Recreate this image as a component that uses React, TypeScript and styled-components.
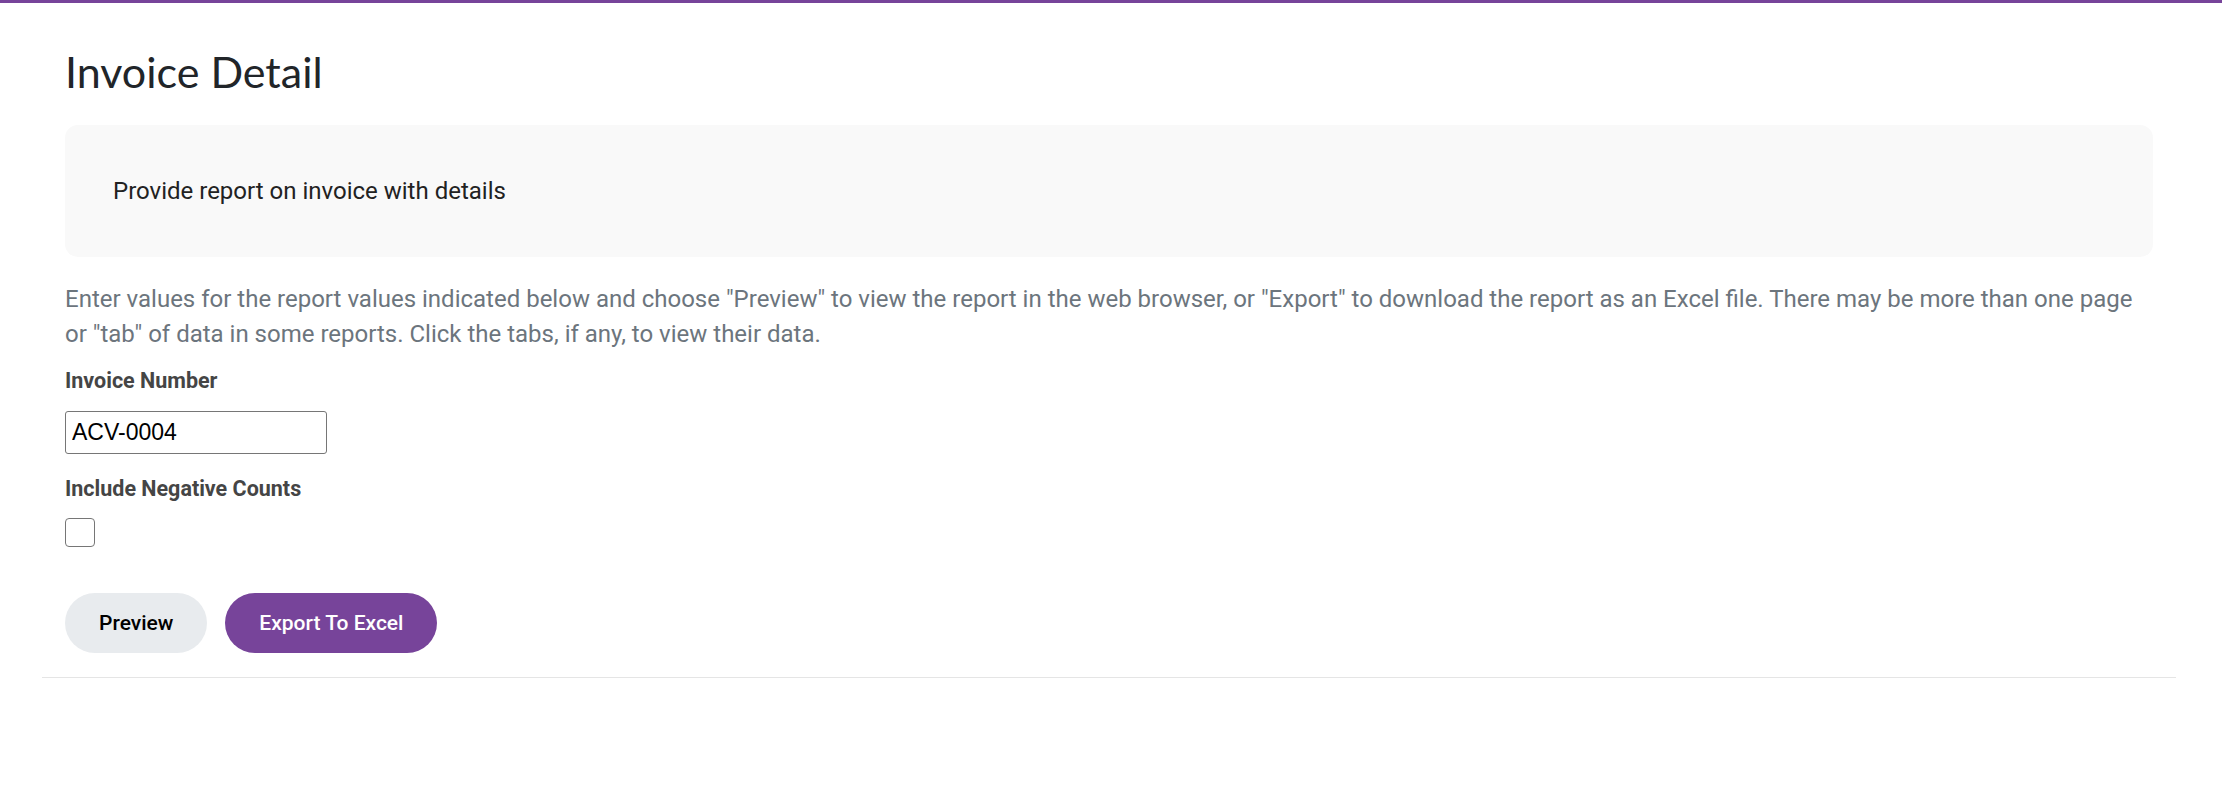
import styled, { createGlobalStyle } from "styled-components";

const purple = "#77449a";

const GlobalStyle = createGlobalStyle`
  html, body {
    margin: 0;
    padding: 0;
    background: #ffffff;
  }
  body {
    font-family: Roboto, "Liberation Sans", Arial, sans-serif;
    color: #212529;
    border-top: 3px solid ${purple};
  }
  * {
    box-sizing: border-box;
  }
`;

const Page = styled.div`
  width: 2134px;
  margin-left: 42px;
  padding: 0 23px 24px;
  border-bottom: 1px solid #e5e5e5;
`;

const Title = styled.h1`
  margin: 43px 0 28px;
  font-family: Lato, "Open Sans", sans-serif;
  font-weight: 400;
  font-size: 43px;
  line-height: 51px;
  color: #212529;
`;

const Summary = styled.div`
  display: flex;
  align-items: center;
  height: 132px;
  padding: 0 48px;
  background: #f9f9f9;
  border-radius: 13px;
  font-size: 24px;
  color: #222222;
  margin-bottom: 25px;
`;

const Help = styled.p`
  margin: 0 0 14px;
  font-size: 24px;
  line-height: 34.5px;
  color: #6c757d;
`;

const Field = styled.div`
  display: flex;
  flex-direction: column;
  align-items: flex-start;
  margin-bottom: 19px;
`;

const Label = styled.label`
  font-size: 21.5px;
  font-weight: 700;
  line-height: 31.5px;
  color: #454545;
  margin-bottom: 14px;
`;

const TextInput = styled.input`
  width: 262px;
  height: 43px;
  padding: 0 6px;
  border: 1px solid #767676;
  border-radius: 3px;
  font-family: "Liberation Sans", Arial, sans-serif;
  font-size: 23px;
  color: #000000;
  background: #ffffff;
  outline: none;
`;

const Check = styled.input`
  appearance: none;
  width: 30px;
  height: 29px;
  margin: 0;
  border: 1.5px solid #767676;
  border-radius: 4px;
  background: #ffffff;
`;

const Actions = styled.div`
  display: flex;
  gap: 18px;
  margin-top: 46px;
`;

const Button = styled.button<{ $primary?: boolean }>`
  height: 60px;
  padding: 0 34px;
  border: none;
  border-radius: 30px;
  font-family: Roboto, sans-serif;
  font-size: 21px;
  font-weight: 500;
  cursor: pointer;
  background: ${(p) => (p.$primary ? purple : "#e8ebee")};
  color: ${(p) => (p.$primary ? "#ffffff" : "#000000")};
`;

export default function App() {
  return (
    <>
      <GlobalStyle />
      <Page>
        <Title>Invoice Detail</Title>
        <Summary>Provide report on invoice with details</Summary>
        <Help>
          Enter values for the report values indicated below and choose
          "Preview" to view the report in the web browser, or "Export" to
          download the report as an Excel file. There may be more than one page
          or "tab" of data in some reports. Click the tabs, if any, to view
          their data.
        </Help>
        <Field>
          <Label htmlFor="invoice">Invoice Number</Label>
          <TextInput id="invoice" type="text" defaultValue="ACV-0004" />
        </Field>
        <Field>
          <Label htmlFor="negative">Include Negative Counts</Label>
          <Check id="negative" type="checkbox" />
        </Field>
        <Actions>
          <Button>Preview</Button>
          <Button $primary>Export To Excel</Button>
        </Actions>
      </Page>
    </>
  );
}
